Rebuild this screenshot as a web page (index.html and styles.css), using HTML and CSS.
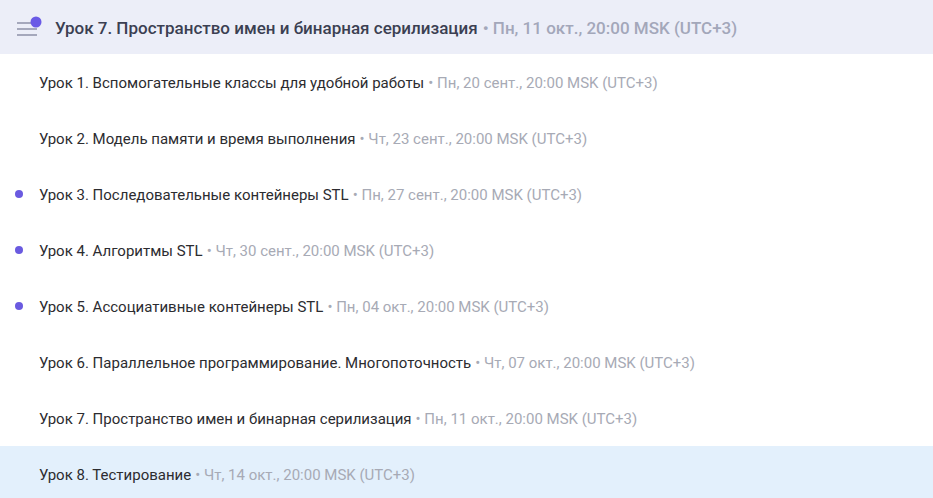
FILE: index.html
```html
<!DOCTYPE html>
<html lang="ru">
<head>
<meta charset="utf-8">
<link rel="stylesheet" href="styles.css">
</head>
<body>
<div class="panel">
  <header class="head">
    <span class="menu-icon">
      <svg width="28" height="26" viewBox="0 0 28 26">
        <line x1="1" y1="10" x2="21" y2="10" stroke="#a5a8bc" stroke-width="2"/>
        <line x1="1" y1="16" x2="21" y2="16" stroke="#a5a8bc" stroke-width="2"/>
        <line x1="1" y1="22" x2="21" y2="22" stroke="#a5a8bc" stroke-width="2"/>
        <circle cx="20" cy="9" r="5.5" fill="#6a5ae6"/>
      </svg>
    </span>
    <span class="head-title">Урок 7. Пространство имен и бинарная серилизация</span>
    <span class="head-date">• Пн, 11 окт., 20:00 MSK (UTC+3)</span>
  </header>
  <ul class="list">
    <li class="row"><span class="mark"></span><span class="title">Урок 1. Вспомогательные классы для удобной работы</span><span class="date">• Пн, 20 сент., 20:00 MSK (UTC+3)</span></li>
    <li class="row"><span class="mark"></span><span class="title">Урок 2. Модель памяти и время выполнения</span><span class="date">• Чт, 23 сент., 20:00 MSK (UTC+3)</span></li>
    <li class="row"><span class="mark dot"></span><span class="title">Урок 3. Последовательные контейнеры STL</span><span class="date">• Пн, 27 сент., 20:00 MSK (UTC+3)</span></li>
    <li class="row"><span class="mark dot"></span><span class="title">Урок 4. Алгоритмы STL</span><span class="date">• Чт, 30 сент., 20:00 MSK (UTC+3)</span></li>
    <li class="row"><span class="mark dot"></span><span class="title">Урок 5. Ассоциативные контейнеры STL</span><span class="date">• Пн, 04 окт., 20:00 MSK (UTC+3)</span></li>
    <li class="row"><span class="mark"></span><span class="title">Урок 6. Параллельное программирование. Многопоточность</span><span class="date">• Чт, 07 окт., 20:00 MSK (UTC+3)</span></li>
    <li class="row"><span class="mark"></span><span class="title">Урок 7. Пространство имен и бинарная серилизация</span><span class="date">• Пн, 11 окт., 20:00 MSK (UTC+3)</span></li>
    <li class="row active"><span class="mark"></span><span class="title">Урок 8. Тестирование</span><span class="date">• Чт, 14 окт., 20:00 MSK (UTC+3)</span></li>
  </ul>
</div>
</body>
</html>
```
FILE: styles.css
```css
* { box-sizing: border-box; }
html, body { margin: 0; padding: 0; background: #ffffff; }
body { font-family: Roboto, "Liberation Sans", sans-serif; }

.panel { width: 933px; }

.head {
  height: 54px;
  background: #eceef8;
  display: flex;
  align-items: center;
  padding-left: 16px;
  padding-top: 2px;
  white-space: nowrap;
}
.menu-icon { display: flex; width: 40px; margin-top: -4px; }
.head-title { font-size: 17px; font-weight: 500; color: #3b3f52; margin-left: -1px; }
.head-date { font-size: 17px; font-weight: 500; color: #a3a7ba; margin-left: 5px; }

.list { list-style: none; margin: 0; padding: 0; }
.row {
  height: 56px;
  display: flex;
  align-items: center;
  padding-left: 15px;
  padding-top: 2px;
  white-space: nowrap;
}
.row.active { background: #e3f0fc; }
.mark { width: 25px; display: flex; align-items: center; margin-top: -2px; }
.mark.dot::before {
  content: "";
  width: 8px; height: 8px; border-radius: 50%;
  background: #6a5ae0;
}
.title { font-size: 15px; color: #2c2c30; margin-left: -1px; }
.date { font-size: 15px; color: #a7aab5; margin-left: 4px; }
```
